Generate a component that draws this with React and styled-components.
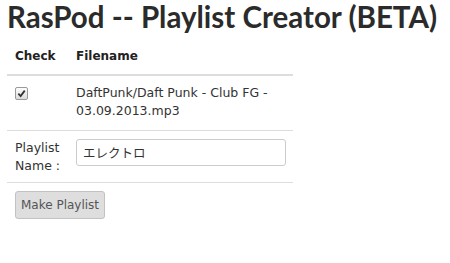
import React from 'react';
import styled, { createGlobalStyle } from 'styled-components';

const GlobalStyle = createGlobalStyle`
  html, body {
    margin: 0;
    padding: 0;
    background: #fff;
  }
  body {
    font-family: 'DejaVu Sans', 'Noto Sans CJK JP', sans-serif;
    color: #333;
  }
`;

const Page = styled.div`
  padding: 0 0 0 7px;
`;

const Title = styled.h1`
  margin: 0;
  font-family: Lato, 'DejaVu Sans', sans-serif;
  font-size: 29.5px;
  line-height: 33px;
  font-weight: bold;
  color: #2b2b2b;
  white-space: nowrap;
`;

const Table = styled.table`
  margin-top: 5px;
  width: 286px;
  table-layout: fixed;
  border-collapse: collapse;
  font-size: 12.5px;
`;

const HeadCell = styled.th`
  text-align: left;
  font-weight: bold;
  font-size: 12px;
  padding: 8px 8px;
  line-height: 20px;
  border-bottom: 2px solid #ddd;
  width: ${(p) => p.$width || 'auto'};
  color: #222;
`;

const Cell = styled.td`
  vertical-align: top;
  padding: 8px 8px ${(p) => p.$padBottom || '8px'};
  line-height: 18px;
  border-top: 1px solid #ddd;
`;

const Check = styled.span`
  display: inline-flex;
  align-items: center;
  justify-content: center;
  margin-top: 3px;
  width: 11px;
  height: 11px;
  border: 1px solid #9a9a9a;
  border-radius: 2px;
  background: linear-gradient(#fdfdfd, #dcdcdc);
`;

const Label = styled.label`
  display: block;
  line-height: 18px;
  white-space: nowrap;
`;

const TextInput = styled.input`
  box-sizing: border-box;
  width: 210px;
  height: 27px;
  padding: 3px 6px;
  font-family: 'DejaVu Sans', 'Noto Sans CJK JP', sans-serif;
  font-size: 12.5px;
  color: #333;
  border: 1px solid #ccc;
  border-radius: 3px;
  outline: none;
`;

const Button = styled.button`
  box-sizing: border-box;
  height: 28px;
  padding: 0 5px;
  font-family: 'DejaVu Sans', sans-serif;
  font-size: 12px;
  color: #555;
  background: #dedede;
  border: 1px solid #c2c2c2;
  border-radius: 3px;
  cursor: pointer;
`;

export default function App() {
  return (
    <>
      <GlobalStyle />
      <Page>
        <Title>RasPod -- Playlist Creator (BETA)</Title>
        <Table>
          <thead>
            <tr>
              <HeadCell $width="45px">Check</HeadCell>
              <HeadCell>Filename</HeadCell>
            </tr>
          </thead>
          <tbody>
            <tr>
              <Cell $padBottom="10px">
                <Check>
                  <svg width="9" height="9" viewBox="0 0 10 10">
                    <path d="M1.5 5.2 L4 7.8 L8.6 1.8" fill="none" stroke="#333" strokeWidth="2" />
                  </svg>
                </Check>
              </Cell>
              <Cell $padBottom="10px">DaftPunk/Daft Punk - Club FG -<br />03.09.2013.mp3</Cell>
            </tr>
            <tr>
              <Cell $padBottom="7px">
                <Label htmlFor="plname">Playlist<br />Name :</Label>
              </Cell>
              <Cell $padBottom="7px">
                <TextInput id="plname" defaultValue="エレクトロ" />
              </Cell>
            </tr>
            <tr>
              <Cell colSpan={2}>
                <Button>Make Playlist</Button>
              </Cell>
            </tr>
          </tbody>
        </Table>
      </Page>
    </>
  );
}
